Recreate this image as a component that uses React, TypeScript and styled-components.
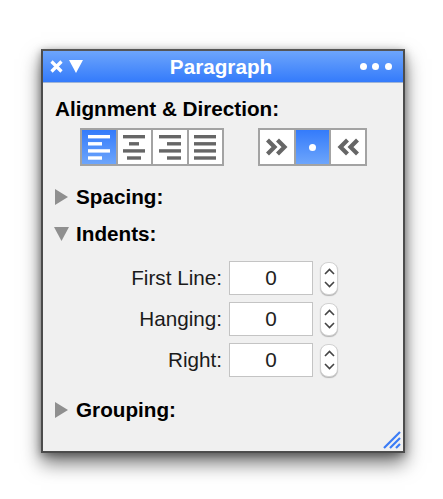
import styled, { createGlobalStyle } from "styled-components";

const GlobalStyle = createGlobalStyle`
  html, body {
    margin: 0;
    background: #ffffff;
  }
  body {
    font-family: "Liberation Sans", Arial, sans-serif;
    color: #000;
  }
`;

const Page = styled.div`
  width: 443px;
  height: 499px;
  padding: 49px 0 0 41px;
  box-sizing: border-box;
  overflow: hidden;
`;

const Panel = styled.div`
  position: relative;
  width: 364px;
  height: 404px;
  box-sizing: border-box;
  border: 2px solid #4c4c4c;
  border-top-color: #555;
  background: #f0f0f0;
  box-shadow: 0 10px 18px rgba(0, 0, 0, 0.55), 0 2px 8px rgba(0, 0, 0, 0.35);
`;

const TitleBar = styled.div`
  height: 31px;
  display: flex;
  align-items: center;
  justify-content: space-between;
  padding: 0 11px 0 7px;
  background: linear-gradient(#6da5fb, #347bfb);
  border-bottom: 1px solid #9fb4d6;
`;

const TitleControls = styled.div`
  display: flex;
  align-items: center;
  gap: 6px;
  width: 60px;
`;

const Title = styled.div`
  color: #fff;
  font-size: 20.7px;
  font-weight: 700;
`;

const Dots = styled.div`
  display: flex;
  gap: 5.5px;
  width: 60px;
  justify-content: flex-end;
`;

const Dot = styled.span`
  width: 7px;
  height: 7px;
  border-radius: 50%;
  background: #fff;
`;

const Body = styled.div`
  padding: 14px 12px 0;
`;

const Heading = styled.div`
  font-size: 20.7px;
  line-height: 24px;
  font-weight: 700;
`;

const ButtonRows = styled.div`
  display: flex;
  gap: 34px;
  margin: 7px 0 0 25px;
`;

const Segments = styled.div`
  display: flex;
  background: #a3a3a3;
  border: 2px solid #a3a3a3;
  gap: 2px;
`;

const Segment = styled.div<{ $active?: boolean }>`
  width: 33.5px;
  height: 34px;
  display: flex;
  align-items: center;
  justify-content: center;
  color: ${(p) => (p.$active ? "#fff" : "#666")};
  background: ${(p) =>
    p.$active ? "linear-gradient(#347bfb, #6da5fb)" : "#fff"};
`;

const Disclosure = styled.div<{ $gap: number }>`
  display: flex;
  align-items: center;
  gap: 8px;
  height: 24px;
  font-size: 20.7px;
  font-weight: 700;
  margin-top: ${(p) => p.$gap}px;
`;

const ArrowBox = styled.span`
  width: 13px;
  display: flex;
  justify-content: center;
  color: #8f8f8f;

  svg {
    flex-shrink: 0;
  }
`;

const Fields = styled.div`
  display: flex;
  flex-direction: column;
  gap: 7px;
  margin-top: 15px;
`;

const FieldRow = styled.div`
  display: flex;
  align-items: center;
  height: 34px;
`;

const FieldLabel = styled.label`
  width: 167px;
  text-align: right;
  font-size: 20.7px;
  color: #1a1a1a;
`;

const FieldInput = styled.div`
  width: 84px;
  height: 34px;
  margin-left: 7px;
  box-sizing: border-box;
  border: 1px solid #c4c4c4;
  background: #fff;
  display: flex;
  align-items: center;
  justify-content: center;
  font-size: 20.7px;
  color: #222;
`;

const Stepper = styled.div`
  width: 16px;
  height: 31px;
  margin-left: 7px;
  border-radius: 8px;
  background: #fff;
  border: 1px solid #d2d2d2;
  box-shadow: 0 1px 1px rgba(0, 0, 0, 0.25);
  display: flex;
  flex-direction: column;
  align-items: center;
  justify-content: center;
  gap: 6px;
  color: #444;
`;

const Grip = styled.svg`
  position: absolute;
  right: 2px;
  bottom: 2px;
`;

function Lines({ rows }: { rows: [number, number][] }) {
  return (
    <svg width="22" height="26" viewBox="0 0 22 26" fill="currentColor">
      {rows.map(([x, w], i) => (
        <rect key={i} x={x} y={1 + i * 7.1} width={w} height="3.4" />
      ))}
    </svg>
  );
}

function Chevrons({ flip }: { flip?: boolean }) {
  return (
    <svg width="22" height="18" viewBox="0 0 22 18" fill="none">
      <g
        stroke="currentColor"
        strokeWidth="4.2"
        transform={flip ? "matrix(-1 0 0 1 22 0)" : undefined}
      >
        <path d="M1.5 2 L8.5 9 L1.5 16" />
        <path d="M11.5 2 L18.5 9 L11.5 16" />
      </g>
    </svg>
  );
}

function TriangleRight() {
  return (
    <svg width="13" height="16" viewBox="0 0 13 16">
      <path d="M0 0 L13 8 L0 16 Z" fill="currentColor" />
    </svg>
  );
}

function TriangleDown() {
  return (
    <svg width="15" height="14" viewBox="0 0 15 14">
      <path d="M0 0 H15 L7.5 14 Z" fill="currentColor" />
    </svg>
  );
}

function StepperControl() {
  return (
    <Stepper>
      <svg width="11" height="7" viewBox="0 0 11 7" fill="none">
        <path d="M1 6 L5.5 1.5 L10 6" stroke="currentColor" strokeWidth="1.6" />
      </svg>
      <svg width="11" height="7" viewBox="0 0 11 7" fill="none">
        <path d="M1 1 L5.5 5.5 L10 1" stroke="currentColor" strokeWidth="1.6" />
      </svg>
    </Stepper>
  );
}

const FIELDS = ["First Line:", "Hanging:", "Right:"];

export default function App() {
  return (
    <Page>
      <GlobalStyle />
      <Panel>
        <TitleBar>
          <TitleControls>
            <svg width="13" height="13" viewBox="0 0 13 13" fill="none">
              <path d="M1.5 1.5 L11.5 11.5 M11.5 1.5 L1.5 11.5" stroke="#fff" strokeWidth="3.2" />
            </svg>
            <svg width="14" height="13" viewBox="0 0 14 13">
              <path d="M0 0 H14 L7 13 Z" fill="#fff" />
            </svg>
          </TitleControls>
          <Title>Paragraph</Title>
          <Dots>
            <Dot />
            <Dot />
            <Dot />
          </Dots>
        </TitleBar>
        <Body>
          <Heading>Alignment &amp; Direction:</Heading>
          <ButtonRows>
            <Segments>
              <Segment $active>
                <Lines rows={[[0, 22], [0, 14], [0, 22], [0, 14]]} />
              </Segment>
              <Segment>
                <Lines rows={[[0, 22], [6, 10], [0, 22], [4, 14]]} />
              </Segment>
              <Segment>
                <Lines rows={[[0, 22], [8, 14], [0, 22], [8, 14]]} />
              </Segment>
              <Segment>
                <Lines rows={[[0, 22], [0, 22], [0, 22], [0, 22]]} />
              </Segment>
            </Segments>
            <Segments>
              <Segment>
                <Chevrons />
              </Segment>
              <Segment $active>
                <Dot />
              </Segment>
              <Segment>
                <Chevrons flip />
              </Segment>
            </Segments>
          </ButtonRows>
          <Disclosure $gap={19}>
            <ArrowBox>
              <TriangleRight />
            </ArrowBox>
            Spacing:
          </Disclosure>
          <Disclosure $gap={13}>
            <ArrowBox>
              <TriangleDown />
            </ArrowBox>
            Indents:
          </Disclosure>
          <Fields>
            {FIELDS.map((label) => (
              <FieldRow key={label}>
                <FieldLabel>{label}</FieldLabel>
                <FieldInput>0</FieldInput>
                <StepperControl />
              </FieldRow>
            ))}
          </Fields>
          <Disclosure $gap={21}>
            <ArrowBox>
              <TriangleRight />
            </ArrowBox>
            Grouping:
          </Disclosure>
        </Body>
        <Grip width="18" height="18" viewBox="0 0 18 18" fill="none">
          <path d="M1 17 L17 1 M7 17 L17 7 M13 17 L17 13" stroke="#3b7cf5" strokeWidth="2.2" />
        </Grip>
      </Panel>
    </Page>
  );
}
